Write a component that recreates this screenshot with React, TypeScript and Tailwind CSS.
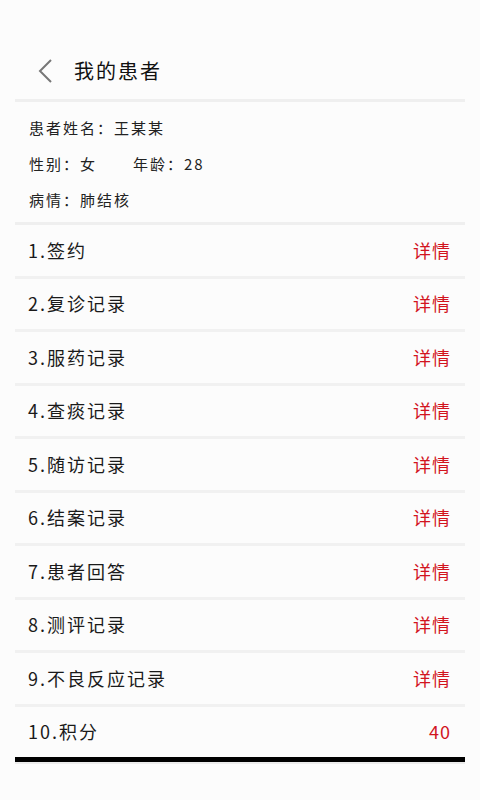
const font = { fontFamily: '"Noto Sans CJK SC", "Noto Sans", sans-serif' };

const items = [
  { label: '1.签约', value: '详情' },
  { label: '2.复诊记录', value: '详情' },
  { label: '3.服药记录', value: '详情' },
  { label: '4.查痰记录', value: '详情' },
  { label: '5.随访记录', value: '详情' },
  { label: '6.结案记录', value: '详情' },
  { label: '7.患者回答', value: '详情' },
  { label: '8.测评记录', value: '详情' },
  { label: '9.不良反应记录', value: '详情' },
  { label: '10.积分', value: '40' },
];

export default function App() {
  return (
    <div className="w-[480px] h-[800px] bg-[#fcfcfc] overflow-hidden" style={font}>
      <div className="px-[15px]">
        {/* header */}
        <div className="h-[99px] pt-[42px] flex items-center">
          <div className="flex items-center h-[56px]">
            <svg width="20" height="28" viewBox="0 0 20 28" className="ml-[21px]">
              <path d="M15 3 L4 14 L15 25" fill="none" stroke="#777" strokeWidth="2" />
            </svg>
            <span className="ml-[18px] text-[20px] tracking-[2px] text-[#111]">我的患者</span>
          </div>
        </div>
        <div className="h-[3px] bg-[#efefef]" />

        {/* patient info */}
        <div className="pt-[14px] pb-[11px] pl-[14px] text-[15px] tracking-[2px] text-[#222] flex flex-col gap-[13px]">
          <div className="leading-[23px]">患者姓名：王某某</div>
          <div className="leading-[23px]">
            性别：女<span className="ml-[36px]">年龄：28</span>
          </div>
          <div className="leading-[23px]">病情：肺结核</div>
        </div>
        <div className="h-[3px] bg-[#efefef]" />

        {/* list */}
        {items.map((it, i) => (
          <div key={i}>
            <div className="h-[50.5px] flex items-center justify-between pl-[13px] pr-[14px]">
              <span className="text-[18px] tracking-[2px] text-[#1a1a1a]">{it.label}</span>
              <span className="text-[18px] tracking-[1px] text-[#d2141e]">{it.value}</span>
            </div>
            {i < items.length - 1 && <div className="h-[3px] bg-[#f1f1f1]" />}
          </div>
        ))}
        <div className="h-[5px] bg-black" />
        <div className="h-[2px] bg-[#ececec]" />
      </div>
    </div>
  );
}
